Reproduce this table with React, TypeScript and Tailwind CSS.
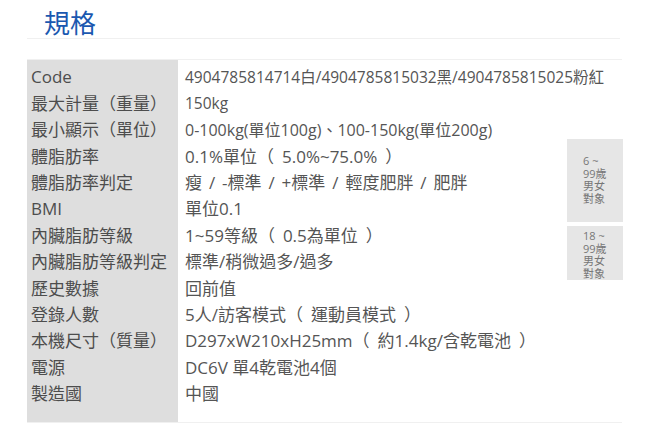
const rows: { label: string; value: string; size: string }[] = [
  { label: 'Code', value: '4904785814714白/4904785815032黑/4904785815025粉紅', size: 'text-[15.5px]' },
  { label: '最大計量（重量）', value: '150kg', size: 'text-[15.5px]' },
  { label: '最小顯示（單位）', value: '0-100kg(單位100g)、100-150kg(單位200g)', size: 'text-[16px]' },
  { label: '體脂肪率', value: '0.1%單位（5.0%~75.0%）', size: 'text-[17px]' },
  { label: '體脂肪率判定', value: '瘦 / -標準 / +標準 / 輕度肥胖 / 肥胖', size: 'text-[17px] [word-spacing:2.5px]' },
  { label: 'BMI', value: '單位0.1', size: 'text-[17px]' },
  { label: '內臟脂肪等級', value: '1~59等級（0.5為單位）', size: 'text-[17px]' },
  { label: '內臟脂肪等級判定', value: '標準/稍微過多/過多', size: 'text-[17px]' },
  { label: '歷史數據', value: '回前值', size: 'text-[17px]' },
  { label: '登錄人數', value: '5人/訪客模式（運動員模式）', size: 'text-[17px]' },
  { label: '本機尺寸（質量）', value: 'D297xW210xH25mm（約1.4kg/含乾電池）', size: 'text-[17px]' },
  { label: '電源', value: 'DC6V 單4乾電池4個', size: 'text-[17px]' },
  { label: '製造國', value: '中國', size: 'text-[17px]' },
];

// full-width brackets sit centred with air on both sides in the original
const Spaced: React.FC<{ text: string }> = ({ text }) => (
  <>
    {text.split(/([（）])/).map((part, i) =>
      part === '（' ? (
        <span key={i} className="pr-[8px]">（</span>
      ) : part === '）' ? (
        <span key={i} className="pl-[8px]">）</span>
      ) : (
        <span key={i}>{part}</span>
      )
    )}
  </>
);

const AgeNote: React.FC<{ lines: string[]; className: string }> = ({ lines, className }) => (
  <div className={`absolute left-[540px] w-[56px] bg-[#e6e6e6] pl-[16px] text-[11px] text-[#777] ${className}`}>
    {lines.map((l) => (
      <div key={l} className="h-[12.7px] leading-[12.7px] whitespace-nowrap">
        {l}
      </div>
    ))}
  </div>
);

const App: React.FC = () => {
  return (
    <div
      className="w-[650px] h-[431px] bg-white text-[#555] px-[27px] pt-[8px]"
      style={{ fontFamily: '"Open Sans", "Noto Sans CJK TC", sans-serif' }}
    >
      {/* Title */}
      <div className="border-b border-[#f0f0f0] mr-[3px] pl-[17px] h-[31px]">
        <h2 className="text-[26px] leading-[31px] text-[#1b58b0]">規格</h2>
      </div>

      {/* Spec table */}
      <div className="relative mt-[20px] w-[595px] border-t border-b border-[#f0f0f0] flex">
        <div className="w-[151px] bg-[#dedede] pt-[4px] pb-[15px] shrink-0">
          {rows.map((r) => (
            <div key={r.label} className="h-[26.4px] flex items-center pl-[4px] text-[17px] text-[#4d4d4d] whitespace-nowrap">
              {r.label}
            </div>
          ))}
        </div>
        <div className="flex-1 pt-[4px] pb-[15px] pl-[7px]">
          {rows.map((r) => (
            <div key={r.label} className={`h-[26.4px] flex items-center whitespace-pre ${r.size}`}>
              <span>
                <Spaced text={r.value} />
              </span>
            </div>
          ))}
        </div>

        {/* Age notes */}
        <AgeNote className="top-[79px] h-[83px] pt-[16px]" lines={['6 ~', '99歲', '男女', '對象']} />
        <AgeNote className="top-[166px] h-[54px] pt-[4px]" lines={['18 ~', '99歲', '男女', '對象']} />
      </div>
    </div>
  );
};

export default App;
